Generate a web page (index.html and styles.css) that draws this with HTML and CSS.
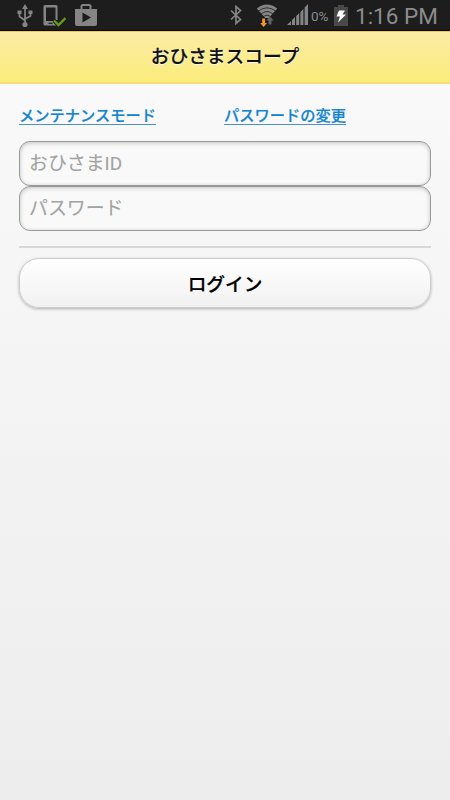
FILE: index.html
```html
<!DOCTYPE html>
<html lang="ja">
<head>
<meta charset="utf-8">
<title>おひさまスコープ</title>
<link rel="stylesheet" href="styles.css">
</head>
<body>
<div class="status">
  <svg class="usb" width="16" height="26" viewBox="0 0 16 26"><path d="M8 4v17M2.500 11v3.500L8 18.500M13.500 10v4L8 17" fill="none" stroke="#858585" stroke-width="1.700"/><path d="M8 2l3 5H5zM.5 8.500h4V12h-4zM11.500 8.500h4V12h-4z" fill="#858585"/><circle cx="8" cy="22.500" r="2.600" fill="#858585"/></svg>
  <svg class="phone" width="24" height="26" viewBox="0 0 24 26"><path d="M2 3h12q1.500 0 1.500 1.500V18l-3 1-1 1 3 3.500H3q-1.500 0-1.500-1.500V4.500Q1.500 3 3 3z" fill="#858585"/><path d="M4 5.500h9.500V19H4z" fill="#1d1d1d"/><path d="M6.500 21.300h4" stroke="#1d1d1d" stroke-width="1.200"/><path d="M12 18.500l4.500 4.500 7-7" fill="none" stroke="#1d1d1d" stroke-width="4"/><path d="M12 18.500l4.500 4.500 7-7" fill="none" stroke="#679b12" stroke-width="2.400"/></svg>
  <svg class="store" width="24" height="24" viewBox="0 0 24 24"><path d="M7.500 7V3.500Q7.500 2 9 2h6q1.500 0 1.500 1.500V7" fill="none" stroke="#858585" stroke-width="2"/><path d="M1 6h22v15q0 2-2 2H3q-2 0-2-2z" fill="#858585"/><path d="M8.500 9.500v10l8.500-5z" fill="#1d1d1d"/></svg>
  <span class="spacer"></span>
  <svg class="bluetooth" width="12" height="20" viewBox="0 0 12 20"><path d="M1 5.500l9.500 9-4.500 4V1.500l4.500 4-9.500 9" fill="none" stroke="#858585" stroke-width="1.700"/></svg>
  <svg class="wifi" width="22" height="26" viewBox="0 0 22 26"><path d="M.8 6.500Q11-1.500 21.200 6.500L11 18z" fill="#858585"/><path d="M2 9.300Q11 2.300 20 9.300M4.500 12.300Q11 6.800 17.500 12.300M7 15Q11 11.500 15 15" fill="none" stroke="#1d1d1d" stroke-width=".8"/><path d="M3.500 16h15v9h-15z" fill="#1d1d1d"/><path d="M6.200 16.500h2.800v4.500h2L7.600 25 4.200 21h2z" fill="#f7981d"/><path d="M12.600 22.500h2.800v-4h2.300L14 14.500 10.300 18.500h2.300z" fill="#666"/></svg>
  <svg class="signal" width="22" height="22" viewBox="0 0 22 22"><path d="M0 21h4v-4zM5 21h3v-8l-3 3zM9.200 21h3V9l-3 3zM13.400 21h3V5l-3 3zM17.600 21H21V0l-3.400 3.500z" fill="#858585"/></svg>
  <span class="percent">0%</span>
  <svg class="battery" width="14" height="23" viewBox="0 0 14 23"><path d="M4 1h6v2h4v19H0V3h4z" fill="#494949"/><path d="M5 6.500h6L8.500 10.500H12L4 18.500l2-6H2.500z" fill="#fff"/></svg>
  <span class="clock">1:16 PM</span>
</div>
<header class="header"><h1 class="title">おひさまスコープ</h1></header>
<main class="content">
  <nav class="links"><a class="link" href="#">メンテナンスモード</a><a class="link" href="#">パスワードの変更</a></nav>
  <form class="form">
    <input class="field" type="text" placeholder="おひさまID">
    <input class="field" type="password" placeholder="パスワード">
    <hr class="rule">
    <button class="login" type="button">ログイン</button>
  </form>
</main>
</body>
</html>
```
FILE: styles.css
```css
* { box-sizing: border-box; }
body {
  margin: 0;
  height: 800px;
  overflow: hidden;
  background: linear-gradient(#f9f9f9 83px, #ededed 800px);
  font-family: Roboto, "Noto Sans CJK JP", sans-serif;
}
.status {
  display: flex;
  align-items: center;
  height: 31px;
  padding: 0 12px 0 17px;
  background: #1d1d1d;
  border-bottom: 1px solid #05051a;
  color: #8c8c8c;
}
.status svg { flex: none; display: block; }
.spacer { flex: 1; }
.phone { margin-left: 9px; }
.store { margin-left: 8px; }
.bluetooth { margin-right: 14px; }
.wifi { margin-right: 9px; }
.signal { margin-right: 2px; }
.percent { width: 21px; padding-top: 1px; font-size: 13.500px; letter-spacing: -.1px; }
.battery { margin-left: 2px; }
.clock { width: 83px; margin-left: 7px; padding-top: 2px; font-size: 22.500px; line-height: 28px; white-space: nowrap; }
.header {
  height: 53px;
  background: linear-gradient(#fceba5, #fbed7b);
  border-top: 1px solid #f7c942;
  border-bottom: 2px solid #fbdc79;
}
.title {
  margin: 0;
  font-size: 18.700px;
  font-weight: 500;
  line-height: 50px;
  text-align: center;
  color: #111;
  text-shadow: 0 1px 1px #fff;
  -webkit-text-stroke: .2px #111;
}
.content { padding: 20px 19px 0; }
.links { display: grid; grid-template-columns: 205px 1fr; height: 37px; line-height: 25px; }
.link {
  justify-self: start;
  height: 21px;
  color: #1585cf;
  font-size: 15.250px;
  font-weight: 500;
  text-decoration: none;
  border-bottom: 1px solid #4d8fd0;
  -webkit-text-stroke: .2px #1585cf;
}
.form { display: flex; flex-direction: column; }
.field {
  width: 412px;
  height: 45px;
  padding: 0 9px 1px;
  border: 1px solid #999;
  border-radius: 11px;
  background: #f9f9f9;
  box-shadow: inset 0 1px 4px rgba(0, 0, 0, .22);
  font: 18.900px Roboto, "Noto Sans CJK JP", sans-serif;
}
.field::placeholder { color: #a3a3a3; opacity: 1; -webkit-text-stroke: .1px #a3a3a3; }
.rule { width: 100%; height: 2px; margin: 15px 0 10px; border: 0; background: #d8d8d8; }
.login {
  width: 412px;
  height: 50px;
  padding: 0 0 1px;
  border: 1px solid #ccc;
  border-radius: 20px;
  background: linear-gradient(#fff, #f1f1f1);
  box-shadow: 0 1px 3px rgba(0, 0, 0, .3);
  font: 500 18.700px Roboto, "Noto Sans CJK JP", sans-serif;
  color: #000;
  -webkit-text-stroke: .2px #000;
}
```
